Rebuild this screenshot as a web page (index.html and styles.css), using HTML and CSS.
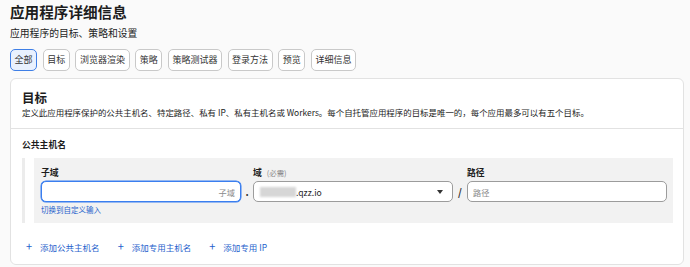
FILE: index.html
```html
<!DOCTYPE html>
<html lang="zh-CN">
<head>
  <meta charset="UTF-8" />
  <title>应用程序详细信息</title>
  <link rel="stylesheet" href="styles.css">
</head>
<body>

  <header class="page-header">
    <h1>应用程序详细信息</h1>
    <p>应用程序的目标、策略和设置</p>
  </header>

  <nav class="tabs">
    <button class="tab active">全部</button>
    <button class="tab">目标</button>
    <button class="tab">浏览器渲染</button>
    <button class="tab">策略</button>
    <button class="tab">策略测试器</button>
    <button class="tab">登录方法</button>
    <button class="tab">预览</button>
    <button class="tab">详细信息</button>
  </nav>

  <section class="card">
    <div class="card-header">
      <h2>目标</h2>
      <p>定义此应用程序保护的公共主机名、特定路径、私有 IP、私有主机名或 Workers。每个自托管应用程序的目标是唯一的，每个应用最多可以有五个目标。</p>
    </div>

    <div class="card-body">
      <h3>公共主机名</h3>
      <div class="host-group">
        <div class="host-panel">
          <label class="field-label">子域</label>
          <span></span>
          <label class="field-label">域 <small>(必需)</small></label>
          <span></span>
          <label class="field-label">路径</label>

          <div class="input focused"><span class="placeholder right">子域</span></div>
          <span class="sep">.</span>
          <div class="input select">
            <span class="blurred"></span><span>.qzz.io</span>
            <span class="caret"></span>
          </div>
          <span class="sep">/</span>
          <div class="input"><span class="placeholder">路径</span></div>

          <a class="switch-link" href="#">切换到自定义输入</a>
        </div>
      </div>
    </div>

    <div class="card-actions">
      <a href="#"><span class="plus">+</span>添加公共主机名</a>
      <a href="#"><span class="plus">+</span>添加专用主机名</a>
      <a href="#"><span class="plus">+</span>添加专用 IP</a>
    </div>
  </section>

</body>
</html>
```

FILE: styles.css
```css
:root {
  --blue: #1f62cc;
  --border: #e2e2e2;
  --panel: #f2f2f2;
  --text: #1d1d1d;
}

body {
  font-family: "Noto Sans CJK SC", "Noto Sans", sans-serif;
  background: #fafafa;
  color: var(--text);
  margin: 0;
  padding: 2px 6px 0 10px;
}

.page-header h1 {
  margin: 0;
  font-size: 14.6px;
  line-height: 20px;
  font-weight: 700;
}

.page-header p {
  margin: 5px 0 0;
  font-size: 9.8px;
  line-height: 12px;
}

.tabs {
  display: flex;
  gap: 5.5px;
  margin-top: 10px;
}

.tab {
  font-family: inherit;
  font-size: 9px;
  line-height: 20px;
  height: 22px;
  padding: 0 3.6px;
  border: 1px solid #c9c9c9;
  border-radius: 5px;
  background: #fff;
  color: #333;
}

.tab.active {
  background: #e9f1fe;
  border-color: #3f7fe6;
}

.card {
  margin-top: 7px;
  background: #fff;
  border: 1px solid var(--border);
  border-radius: 6px;
}

.card-header {
  padding: 10px 11px 10px;
  border-bottom: 1px solid var(--border);
}

.card-header h2 {
  margin: 0;
  font-size: 12.5px;
  line-height: 17px;
  font-weight: 700;
}

.card-header p {
  margin: 0;
  font-size: 8.45px;
  line-height: 12px;
}

.card-body {
  padding: 10px 10px 0 11px;
}

.card-body h3 {
  margin: 0;
  font-size: 8.8px;
  line-height: 12px;
  font-weight: 600;
}

.host-group {
  margin-top: 7px;
  border-left: 3px solid #ececec;
  padding-left: 9px;
}

.host-panel {
  background: var(--panel);
  padding: 9px 6px 8px 7px;
  display: grid;
  grid-template-columns: 1fr 12px 1fr 14px 1fr;
  align-items: center;
}

.field-label {
  font-size: 8.8px;
  line-height: 12px;
  font-weight: 600;
  margin-bottom: 2px;
}

.field-label small {
  font-size: 7.4px;
  font-weight: 400;
  color: #888;
  margin-left: 3px;
}

.input {
  height: 19px;
  border: 1px solid #9c9c9c;
  border-radius: 5px;
  background: #fff;
  display: flex;
  align-items: center;
  padding: 0 5px;
  font-size: 8.6px;
}

.input.focused {
  border-color: #3a7eef;
  box-shadow: 0 0 0 0.5px #3a7eef;
}

.placeholder {
  color: #8a8a8a;
  font-size: 8.2px;
}

.placeholder.right {
  margin-left: auto;
}

.select {
  position: relative;
}

.blurred {
  width: 36px;
  height: 10px;
  margin-left: 1px;
  background: #d6d6d6;
  filter: blur(1.2px);
}

.caret {
  position: absolute;
  right: 9px;
  top: 8px;
  border-left: 3px solid transparent;
  border-right: 3px solid transparent;
  border-top: 4px solid #333;
}

.sep {
  text-align: center;
  font-size: 10px;
  font-weight: 600;
  color: #333;
}

.switch-link {
  grid-column: 1;
  margin-top: 3px;
  font-size: 7.5px;
  line-height: 10px;
  color: var(--blue);
  text-decoration: none;
}

.card-actions {
  display: flex;
  gap: 18px;
  padding: 17px 15px 11px;
}

.card-actions a {
  color: var(--blue);
  text-decoration: none;
  font-size: 8.5px;
  line-height: 12px;
}

.plus {
  font-size: 11px;
  margin-right: 8px;
}
```
